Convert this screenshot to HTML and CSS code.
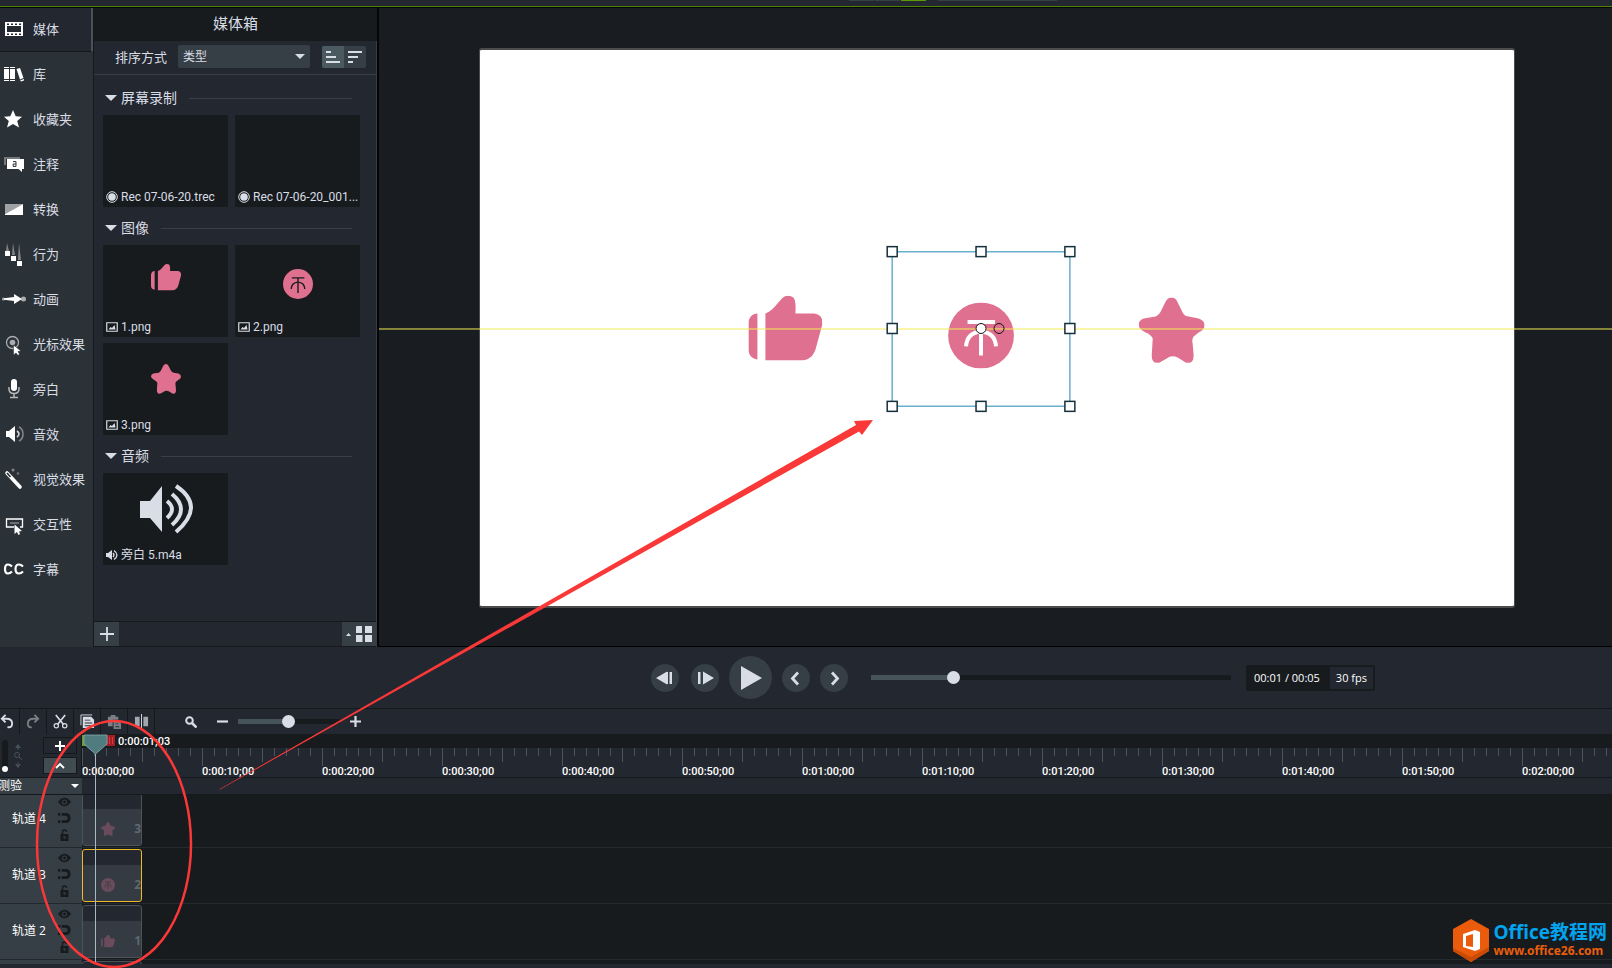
FILE: index.html
```html
<!DOCTYPE html>
<html lang="zh-CN">
<head>
<meta charset="utf-8">
<title>媒体箱</title>
<link rel="stylesheet" href="styles.css">
</head>
<body>
<svg class="defs" aria-hidden="true">
  <symbol id="thumb" viewBox="0 0 74 65"><path d="M9 18V64C3 63 0 59 0 54V28C0 22 4 18 9 18zM17 18C26 15 30 5 36 1Q41-1 45 2Q48 5 47 18H66Q75 19 74 29L68 51Q65 64 54 65H17z"/></symbol>
  <symbol id="star" viewBox="0 0 66 66"><path d="M33 0Q37 0 39 5L44 15Q46 19 50 19L60 21Q66 23 66 28Q66 32 60 35L55 39Q53 42 54 46L55 58Q55 67 47 65L39 60Q33 57 28 61L21 65Q13 67 13 58L14 41Q12 37 7 35Q0 32 0 27Q0 23 5 21L17 19Q21 17 23 12L27 4Q29 0 33 0z"/></symbol>
  <symbol id="tree" viewBox="0 0 66 66"><circle cx="33" cy="33" r="33"/><path d="M19.500 19.500H47M33 20V53M18 44Q19 30 33 29Q47 30 48 44" fill="none" stroke="var(--mark)" stroke-width="var(--mark-width)"/></symbol>
  <symbol id="picture" viewBox="0 0 12 10"><path d="M.75.75H11.250V9.250H.75z" fill="none" stroke="currentColor" stroke-width="1.200"/><path d="M2.500 7.500L4.500 5L6 6L8.500 3L9.500 7.500z" fill="currentColor"/></symbol>
  <symbol id="record" viewBox="0 0 12 12"><circle cx="6" cy="6" r="5.300" fill="none" stroke="currentColor"/><circle cx="6" cy="6" r="3.800" fill="currentColor"/></symbol>
  <symbol id="eye" viewBox="0 0 14 10"><path d="M0 5Q7-4 14 5Q7 14 0 5z"/><circle cx="7" cy="5" r="2.800" fill="#363e46"/><circle cx="7" cy="5" r="1.600"/></symbol>
  <symbol id="magnet" viewBox="0 0 14 12"><path d="M0 2H2.500M4 2H8Q12 2 12 6T8 10H4M2.500 10H0" fill="none" stroke="currentColor" stroke-width="3"/></symbol>
  <symbol id="lock" viewBox="0 0 10 12"><path d="M1 5H9V12H1z"/><path d="M3 5V3Q3 1 5 1T7 3" fill="none" stroke="currentColor" stroke-width="1.500"/><circle cx="5" cy="8.500" r="1.200" fill="#363e46"/></symbol>
</svg>

<div class="titlebar"><span class="seg"></span><span class="seg"></span><span class="seg on"></span><span class="seg wide"></span></div>

<main class="workspace">
  <nav class="sidebar">
    <button class="nav active"><svg viewBox="0 0 24 24"><path fill-rule="evenodd" d="M3 5H21V19H3zM5 9V15H19V9zM5 6.500V8H7V6.500zM9 6.500V8H11V6.500zM13 6.500V8H15V6.500zM17 6.500V8H19V6.500zM5 16.500V18H7V16.500zM9 16.500V18H11V16.500zM13 16.500V18H15V16.500zM17 16.500V18H19V16.500z"/></svg>媒体</button>
    <button class="nav"><svg viewBox="0 0 24 24"><path d="M2 7H7V17H2zM8 7H13V17H8zM14.500 7L18 6L21.500 16L18 17.500zM2 5H7V6H2zM8 5H13V6H8zM2 18H7V19H2zM8 18H13V19H8zM18 18.500L22 17V18.500L19 19.500z"/></svg>库</button>
    <button class="nav"><svg viewBox="0 0 24 24"><path d="M11 3L13.700 9.300L20 9.700L15.200 14L17 20.500L11 17L5 20.500L6.800 14L2 9.700L8.300 9.300z"/></svg>收藏夹</button>
    <button class="nav"><svg viewBox="0 0 24 24"><path d="M2 5H18V7H4V13H2z" opacity=".35"/><path d="M5 7H22V17H20V20L16.500 17H5z"/><path d="M11 9.600H14V14.400H11.200V12H14" fill="none" stroke="#2b3237"/></svg>注释</button>
    <button class="nav"><svg viewBox="0 0 24 24"><path d="M3 7H21L3 17z" opacity=".55"/><path d="M21 7V18H3V17z"/></svg>转换</button>
    <button class="nav"><svg viewBox="0 0 24 24"><path d="M5 1L7 9H4zM11 1L13 13H10zM17 1L19 18H16z" opacity=".4"/><path d="M3 9H8V14H3zM9 14H14V19H9zM15 19H20V24H15z"/></svg>行为</button>
    <button class="nav"><svg viewBox="0 0 24 24"><path d="M2 11.200L12 10V7L20 12L12 17V14L2 12.800z"/><circle cx="1.500" cy="12" r="1.500" opacity=".6"/><circle cx="21.500" cy="12" r="2.500" opacity=".6"/></svg>动画</button>
    <button class="nav"><svg viewBox="0 0 24 24"><g opacity=".6"><circle cx="10.500" cy="10.500" r="6" fill="none" stroke="currentColor" stroke-width="1.300"/><circle cx="10.500" cy="10.500" r="2.800"/></g><path d="M11.500 13V23L14 21L16 23.500L17.500 22L16 19.500L19 19z" stroke="#2b3237" stroke-width=".6"/></svg>光标效果</button>
    <button class="nav"><svg viewBox="0 0 24 24"><rect x="9" y="2" width="6" height="12" rx="3"/><path d="M7 10V12Q7 16.500 12 16.500T17 12V10M12 17V20M8 20.500H16" fill="none" stroke="currentColor" stroke-width="1.500" opacity=".65"/></svg>旁白</button>
    <button class="nav"><svg viewBox="0 0 24 24"><path d="M4 9H7L13 4V20L7 15H4z"/><path d="M15 9Q19 12 15 15" fill="none" stroke="currentColor" stroke-width="1.600" opacity=".8"/><path d="M17 5Q21 7 21 12T17 19" fill="none" stroke="currentColor" stroke-width="1.600" opacity=".4"/></svg>音效</button>
    <button class="nav"><svg viewBox="0 0 24 24"><path d="M5 6L18 20" fill="none" stroke="currentColor" stroke-width="3.600" stroke-linecap="round"/><path d="M5 6L8.500 10" stroke="#2b3237" stroke-width="1.600"/><circle cx="11" cy="3" r="1.500" opacity=".4"/><circle cx="16" cy="6.500" r="1.300" opacity=".3"/></svg>视觉效果</button>
    <button class="nav"><svg viewBox="0 0 24 24"><path d="M12 15H4.500V7H20.500V15H18" fill="none" stroke="currentColor" stroke-width="1.300"/><path d="M8 11H17" stroke="currentColor" opacity=".6"/><path d="M12.500 12.500V22L15 20L16.500 23L18 22L17 19.500L20 19z"/></svg>交互性</button>
    <button class="nav"><svg viewBox="0 0 24 24"><path d="M10 9.500Q8 7.500 6 7.500Q3 7.500 3 12T6 16.500Q8 16.500 10 14.500M21 9.500Q19 7.500 17 7.500Q13.500 7.500 13.500 12T17 16.500Q19 16.500 21 14.500" fill="none" stroke="currentColor" stroke-width="2.200"/></svg>字幕</button>
  </nav>

  <section class="bin">
    <h1>媒体箱</h1>
    <div class="sort">
      <label for="sort">排序方式</label>
      <span class="select"><select id="sort"><option>类型</option></select></span>
      <div class="order">
        <button class="on" aria-label="升序"><svg viewBox="0 0 16 14"><path d="M1 2H6M1 7H11M1 12H15" stroke="currentColor" stroke-width="2"/></svg></button>
        <button aria-label="降序"><svg viewBox="0 0 16 14"><path d="M1 2H15M1 7H11M1 12H6" stroke="currentColor" stroke-width="2"/></svg></button>
      </div>
    </div>
    <div class="groups">
      <h2>屏幕录制</h2>
      <div class="cards">
        <figure><div class="pic"></div><figcaption><svg><use href="#record"/></svg><span>Rec 07-06-20.trec</span></figcaption></figure>
        <figure><div class="pic"></div><figcaption><svg><use href="#record"/></svg><span>Rec 07-06-20_001...</span></figcaption></figure>
      </div>
      <h2>图像</h2>
      <div class="cards">
        <figure><div class="pic raised"><svg class="art"><use href="#thumb"/></svg></div><figcaption><svg><use href="#picture"/></svg><span>1.png</span></figcaption></figure>
        <figure><div class="pic"><svg class="art"><use href="#tree"/></svg></div><figcaption><svg><use href="#picture"/></svg><span>2.png</span></figcaption></figure>
        <figure><div class="pic centered"><svg class="art"><use href="#star"/></svg></div><figcaption><svg><use href="#picture"/></svg><span>3.png</span></figcaption></figure>
      </div>
      <h2>音频</h2>
      <div class="cards">
        <figure><div class="pic centered"><svg class="speaker" viewBox="0 0 54 50"><path d="M1 17H11L23 2V48L11 34H1z" fill="currentColor"/><path d="M28 17Q38 25 28 34M33 10Q51 25 33 41M37 2Q67 22 37 48" fill="none" stroke="currentColor" stroke-width="4"/></svg></div><figcaption><svg viewBox="0 0 12 12"><path d="M0 4H2L6 1V11L2 8H0z" fill="currentColor"/><path d="M7 4Q9 6 7 8M8 1.500Q14 6 8 10.500" fill="none" stroke="currentColor" stroke-width="1.300"/></svg><span>旁白 5.m4a</span></figcaption></figure>
      </div>
    </div>
    <div class="binfoot">
      <button class="add" aria-label="添加"><svg viewBox="0 0 14 14"><path d="M7 0V14M0 7H14" stroke="currentColor" stroke-width="1.800"/></svg></button>
      <button class="view" aria-label="视图"><svg viewBox="0 0 26 16"><path d="M0 10L2.500 7L5 10zM10 1Q10 0 11 0H16V7H10zM19 0H26V7H19zM10 9H16.500V16H10zM19 9H26V16H19z" fill="currentColor"/></svg></button>
    </div>
  </section>

  <section class="preview">
    <div class="stage">
      <svg class="scene" viewBox="0 0 1034 557">
        <g class="pink">
          <use href="#thumb" x="268" y="246" width="74" height="65"/>
          <use href="#tree" x="468" y="253" width="66" height="66"/>
          <use href="#star" x="659" y="248" width="66" height="66"/>
        </g>
        <path class="selection" d="M412 202H590V357H412z"/>
        <path class="guide" d="M-103 279.500H1135"/>
        <g class="handles">
          <rect x="407" y="197" width="10" height="10"/><rect x="496" y="197" width="10" height="10"/><rect x="585" y="197" width="10" height="10"/>
          <rect x="407" y="274" width="10" height="10"/><rect x="585" y="274" width="10" height="10"/>
          <rect x="407" y="352" width="10" height="10"/><rect x="496" y="352" width="10" height="10"/><rect x="585" y="352" width="10" height="10"/>
          <circle cx="501" cy="279" r="5"/><circle class="hollow" cx="519" cy="279" r="5"/>
        </g>
      </svg>
    </div>
  </section>
</main>

<section class="player">
  <button aria-label="上一帧"><svg viewBox="0 0 28 28"><path d="M5 14L16 7.500V20.500zM16 8H17V20H16zM18.500 8H21V20H18.500z" fill="currentColor"/></svg></button>
  <button aria-label="下一帧"><svg viewBox="0 0 28 28"><path d="M7 8H9.500V20H7zM12 7.500L23 14L12 20.500z" fill="currentColor"/></svg></button>
  <button class="play" aria-label="播放"><svg viewBox="0 0 43 43"><path d="M12 10L33 22L12 34z" fill="currentColor"/></svg></button>
  <button aria-label="上一个"><svg viewBox="0 0 28 28"><path d="M16 8.500L10.500 14.500L16 20.500" fill="none" stroke="currentColor" stroke-width="2.800"/></svg></button>
  <button aria-label="下一个"><svg viewBox="0 0 28 28"><path d="M12 8.500L17.500 14.500L12 20.500" fill="none" stroke="currentColor" stroke-width="2.800"/></svg></button>
  <input class="range seek" type="range" min="0" max="100" value="22" aria-label="播放位置">
  <div class="clock"><span>00:01 / 00:05</span><span class="fps">30 fps</span></div>
</section>

<section class="toolbar">
  <div class="tools">
    <button aria-label="撤消"><svg viewBox="0 0 16 16"><path d="M4 5H8Q14 5 14 10T9 14M7 1L3 5L7 9" fill="none" stroke="currentColor" stroke-width="2"/></svg></button>
    <button class="off" aria-label="重做"><svg viewBox="0 0 16 16"><path d="M12 5H8Q2 5 2 10T6 14M9 1L13 5L9 9" fill="none" stroke="currentColor" stroke-width="2"/></svg></button>
    <button aria-label="剪切"><svg viewBox="0 0 16 16"><path d="M3 1L11 11M13 1L5 11" fill="none" stroke="currentColor" stroke-width="1.800"/><circle cx="3.500" cy="12.500" r="2.300" fill="none" stroke="currentColor" stroke-width="1.300"/><circle cx="12.500" cy="12.500" r="2.300" fill="none" stroke="currentColor" stroke-width="1.300"/></svg></button>
    <button aria-label="复制"><svg viewBox="0 0 16 16"><path d="M1 12V1H13" fill="none" stroke="currentColor"/><path fill-rule="evenodd" d="M3 3H12L15 6V15H3zM5 6V7H11V6zM5 9V10H13V9zM5 12V13H13V12z" fill="currentColor"/></svg></button>
    <button class="off" aria-label="粘贴"><svg viewBox="0 0 16 16"><path fill-rule="evenodd" d="M1 3H4V1H9V3H12V6H6V13H1zM7 7H12L15 10V16H7zM9 10V11H12V10zM9 13V14H13V13z" fill="currentColor"/></svg></button>
    <button aria-label="拆分"><svg viewBox="0 0 16 16"><path d="M1 3H6V13H1zM10 3H15V13H10z" fill="currentColor" opacity=".7"/><path d="M8 0V16" stroke="currentColor"/></svg></button>
  </div>
  <div class="zoom">
    <svg class="lens" viewBox="0 0 12 12"><circle cx="4.500" cy="4.500" r="3.300" fill="none" stroke="currentColor" stroke-width="2"/><path d="M7 7L11.500 11.500" stroke="currentColor" stroke-width="2.500"/></svg>
    <button aria-label="缩小"><svg viewBox="0 0 10 10"><path d="M0 5H10" stroke="currentColor" stroke-width="2"/></svg></button>
    <input class="range" type="range" min="0" max="100" value="49" aria-label="时间轴缩放">
    <button aria-label="放大"><svg viewBox="0 0 10 10"><path d="M0 5H10M5 0V10" stroke="currentColor" stroke-width="2"/></svg></button>
  </div>
</section>

<section class="timeline">
  <div class="corner">
    <input class="vertical" type="range" min="0" max="100" value="0" aria-label="轨道高度">
    <svg class="height" viewBox="0 0 10 24"><path d="M5 0L8 4H2zM4.500 3H5.500V6H4.500zM5 24L8 20H2zM4.500 18H5.500V21H4.500z" fill="currentColor"/><circle cx="4" cy="11" r="2.500" fill="none" stroke="currentColor"/><path d="M6 13L9 16" stroke="currentColor"/></svg>
    <div class="pair">
      <button aria-label="添加轨道"><svg viewBox="0 0 10 10"><path d="M0 5H10M5 0V10" stroke="currentColor" stroke-width="2"/></svg></button>
      <button class="on" aria-label="收起"><svg viewBox="0 0 10 10"><path d="M1 7L5 3L9 7" fill="none" stroke="currentColor" stroke-width="1.800"/></svg></button>
    </div>
  </div>
  <div class="scale">
    <div class="now">0:00:01;03</div>
    <div class="ruler"><span>0:00:00;00</span><span>0:00:10;00</span><span>0:00:20;00</span><span>0:00:30;00</span><span>0:00:40;00</span><span>0:00:50;00</span><span>0:01:00;00</span><span>0:01:10;00</span><span>0:01:20;00</span><span>0:01:30;00</span><span>0:01:40;00</span><span>0:01:50;00</span><span>0:02:00;00</span></div>
  </div>
  <button class="quiz">测验</button><div class="quizlane"></div>
  <div class="head first">轨道 4<div class="flags"><svg><use href="#eye"/></svg><svg><use href="#magnet"/></svg><svg><use href="#lock"/></svg></div></div>
  <div class="lane first"><div class="clip"><svg><use href="#star"/></svg><span>3</span></div></div>
  <div class="head">轨道 3<div class="flags"><svg><use href="#eye"/></svg><svg><use href="#magnet"/></svg><svg><use href="#lock"/></svg></div></div>
  <div class="lane"><div class="clip selected"><svg><use href="#tree"/></svg><span>2</span></div></div>
  <div class="head">轨道 2<div class="flags"><svg><use href="#eye"/></svg><svg><use href="#magnet"/></svg><svg><use href="#lock"/></svg></div></div>
  <div class="lane"><div class="clip"><svg><use href="#thumb"/></svg><span>1</span></div></div>
  <div class="head last"></div><div class="lane last"><div class="clip"></div></div>
  <svg class="playhead" viewBox="0 0 34 228"><path d="M0 1H6V12H0z" fill="#6b9e1e"/><path d="M24 1H33V12H24z" fill="#a51d22"/><path d="M27.500 3V10M30.500 3V10" stroke="#d33b3f"/><path d="M2 1H25V10L13.500 20L2 10z" fill="#507c80" stroke="#77a0a3"/><path d="M13.500 20V228" stroke="#a6b9c8"/></svg>
</section>
<footer class="scrollbar"></footer>

<svg class="notes" aria-hidden="true">
  <ellipse cx="114" cy="844" rx="77" ry="123" fill="none" stroke="#fb3838" stroke-width="2.500"/>
  <path d="M219 789.500L856 425L854 421L873 420L862 435L859 431.500L220 789.500z" fill="#fb3838"/>
</svg>
<aside class="brand">
  <svg viewBox="0 0 36 44"><path d="M18 0L36 10V32L18 43L0 32V10z" fill="#ea5c0c"/><path d="M0 32L18 43L36 32V28L18 38L0 29z" fill="#c94b05"/><path fill-rule="evenodd" d="M10 15L22 11L27 13V30L22 32L10 28zM13 17V27L20 28V15z" fill="#fff"/></svg>
  <div><strong>Office教程网</strong><a href="#">www.office26.com</a></div>
</aside>
</body>
</html>
```

FILE: styles.css
```css
:root {
  --panel: #23272f;
  --dark: #171b1e;
  --raised: #363e46;
  --line: #15191c;
  --ink: #d9dde5;
  --teal: #46535a;
  --pink: #e0708f;
  --mark: #171b1e;
  --mark-width: 3;
}
* { box-sizing: border-box; }
body {
  margin: 0;
  height: 100vh;
  overflow: hidden;
  display: flex;
  flex-direction: column;
  position: relative;
  background: var(--panel);
  color: var(--ink);
  font: 13px/20px "Open Sans", "Noto Sans CJK SC", sans-serif;
}
button { border: 0; padding: 0; background: none; color: inherit; font: inherit; display: flex; align-items: center; justify-content: center; }
svg { display: block; flex: none; }
.defs { position: absolute; width: 0; height: 0; }

.titlebar { flex: none; height: 8px; border-bottom: 1px solid #050607; box-shadow: inset 0 -1px #4c8208; display: flex; gap: 1px; padding-left: 849px; }
.seg { width: 25px; height: 1px; background: var(--raised); }
.seg.on { background: #5a9a05; }
.seg.wide { width: 119px; margin-left: 11px; }

.workspace { flex: 1; min-height: 0; display: flex; }
.sidebar { width: 94px; background: #2b3237; border-right: 1px solid var(--line); overflow: hidden; }
.nav { width: 100%; height: 45px; gap: 7px; padding: 0 0 1px 2px; justify-content: flex-start; white-space: nowrap; }
.nav svg { width: 24px; height: 24px; fill: currentColor; color: #fff; }
.nav.active { height: 44px; background: var(--panel); border-right: 2px solid var(--teal); border-bottom: 1px solid var(--line); }

.bin { width: 285px; display: flex; flex-direction: column; border-right: 2px solid #050607; box-shadow: inset -1px 0 #383d45; }
h1 { margin: 0; height: 33px; font-size: 15px; line-height: 30px; font-weight: 400; text-align: center; background: var(--dark); }
.sort { height: 34px; display: flex; align-items: center; padding: 0 11px 2px 21px; border-bottom: 1px solid #3a3f47; }
.sort label { width: 63px; }
.select { width: 132px; position: relative; }
.select::after { content: ""; position: absolute; right: 5px; top: 9px; border: 5px solid transparent; border-top-color: var(--ink); border-bottom: 0; pointer-events: none; }
select { appearance: none; display: block; width: 100%; height: 23px; border: 0; border-radius: 2px; padding: 0 5px; color: var(--ink); background: var(--raised); font: 12px/20px "Open Sans", "Noto Sans CJK SC", sans-serif; }
.order { display: flex; margin-left: auto; border-radius: 2px; overflow: hidden; background: var(--raised); }
.order button { width: 22px; height: 22px; }
.order .on { background: #4a5a60; }
.order svg { width: 16px; height: 14px; }
.groups { flex: 1; padding: 13px 16px 0 9px; overflow: hidden; }
h2 { margin: 0 9px 7px 2px; height: 20px; display: flex; align-items: center; font-size: 14px; line-height: 20px; font-weight: 400; }
h2::before { content: ""; margin-right: 4px; border: 6px solid transparent; border-top-color: var(--ink); border-bottom: 0; }
h2::after { content: ""; flex: 1; height: 1px; margin-left: 12px; background: #3a3f47; }
.cards { display: grid; grid-template-columns: 125px 125px; gap: 6px 7px; margin-bottom: 11px; }
figure { margin: 0; background: var(--dark); border-radius: 1px; }
.pic { height: 72px; display: flex; align-items: center; justify-content: center; padding-top: 6px; }
.pic.centered { padding-top: 0; }
.pic.raised { padding: 0 0 8px; }
.art { width: 30px; height: 30px; fill: var(--pink); }
.speaker { width: 54px; height: 50px; }
figcaption { height: 20px; display: flex; align-items: center; gap: 3px; padding: 0 0 1px 3px; font: 12px/18px Roboto, "Noto Sans CJK SC", sans-serif; }
figcaption svg { width: 12px; height: 12px; }
figcaption span { white-space: nowrap; }
.binfoot { height: 26px; display: flex; justify-content: space-between; border-top: 1px solid var(--line); border-bottom: 1px solid var(--line); margin-right: 1px; }
.binfoot button { background: var(--raised); }
.add { width: 25px; }
.add svg { width: 14px; height: 14px; }
.view { width: 34px; }
.view svg { width: 26px; height: 16px; }

.preview { flex: 1; min-width: 0; padding: 40px 97px 38px 100px; background: #191c20; border-bottom: 1px solid #000; overflow: hidden; }
.stage { height: 100%; background: #fff; border: 1px solid #4b4b4b; border-width: 2px 1px; border-radius: 3px; }
.scene { width: 100%; height: 100%; overflow: visible; --mark: #fff; --mark-width: 4; }
.pink { fill: var(--pink); }
.selection { fill: none; stroke: #69b0ce; stroke-width: 1.500; }
.guide { stroke: #f2ec55; }
.handles { fill: #fff; stroke: #14303c; stroke-width: 1.500; }
.handles circle { stroke: #111; stroke-width: 1; }
.handles .hollow { fill: none; }

.player { flex: none; height: 62px; display: flex; align-items: center; padding-left: 651px; border-bottom: 1px solid var(--line); }
.player button { width: 28px; height: 28px; border-radius: 50%; background: var(--raised); margin-right: 10px; }
.player button:first-child { margin-right: 12px; }
.player button svg { width: 100%; }
.player .play { width: 43px; height: 43px; }
.range { appearance: none; height: 14px; margin: 0; background: linear-gradient(var(--teal), var(--teal)) 0 50% / 50% 5px no-repeat, linear-gradient(var(--dark), var(--dark)) 0 50% / 100% 5px no-repeat; }
.range::-webkit-slider-thumb { appearance: none; width: 13px; height: 13px; border-radius: 50%; background: var(--ink); }
.seek { width: 360px; margin-left: 13px; background-size: 23% 5px, 100% 5px; }
.clock { display: flex; align-items: center; gap: 10px; height: 26px; margin-left: 15px; padding: 0 2px 0 8px; border-radius: 2px; background: var(--dark); font-size: 11px; line-height: 22px; color: #fff; }
.fps { padding: 0 6px; background: var(--panel); }

.toolbar { flex: none; height: 25px; display: flex; align-items: center; overflow: hidden; }
.tools { display: flex; margin-left: -7px; }
.tools button { width: 27px; height: 25px; border-right: 1px solid var(--line); }
.tools svg { width: 15px; height: 15px; }
.off { color: #7a7f86; }
.zoom { display: flex; align-items: center; margin-left: 30px; }
.lens { width: 12px; height: 12px; margin-right: 20px; }
.zoom button svg { width: 11px; height: 11px; }
.zoom .range { width: 102px; margin: 0 10px; }

.timeline { flex: none; position: relative; display: grid; grid-template-columns: 82px minmax(0, 1fr); color: #fff; }
.corner { display: flex; align-items: center; height: 44px; padding: 0 4px 0 2px; border-bottom: 1px solid var(--line); border-right: 1px solid var(--line); }
.vertical { appearance: none; writing-mode: vertical-lr; direction: rtl; width: 6px; height: 32px; margin: 0; border-radius: 3px; background: var(--dark); }
.vertical::-webkit-slider-thumb { appearance: none; width: 6px; height: 6px; border-radius: 50%; background: #fff; }
.height { width: 10px; height: 24px; margin-left: 5px; color: var(--teal); }
.pair { margin-left: auto; display: grid; gap: 3px; }
.pair button { width: 34px; height: 17px; border: 1px solid var(--line); }
.pair .on { background: #414c52; }
.pair svg { width: 10px; height: 10px; }
.scale { background: var(--dark); border-bottom: 1px solid var(--line); overflow: hidden; }
.now { height: 14px; padding-left: 36px; font: 500 11px/15px Roboto, sans-serif; }
.ruler { height: 29px; display: flex; align-items: flex-end; font: 500 11px/11px Roboto, sans-serif;
  background:
    repeating-linear-gradient(90deg, #4a565c 0 1px, transparent 1px 120px) 0 0 / 100% 18px no-repeat,
    repeating-linear-gradient(90deg, #4a565c 0 1px, transparent 1px 60px) 0 0 / 100% 14px no-repeat,
    repeating-linear-gradient(90deg, #4a565c 0 1px, transparent 1px 12px) 0 0 / 100% 8px no-repeat,
    var(--panel); }
.ruler span { flex: 0 0 120px; }
.quiz { height: 17px; justify-content: flex-start; background: var(--raised); font-size: 12px; border-bottom: 1px solid var(--line); text-indent: -2px; }
.quiz::after { content: ""; margin-left: auto; margin-right: 3px; border: 4px solid transparent; border-top-color: #fff; border-bottom: 0; }
.quizlane { border-bottom: 1px solid var(--line); }
.head { height: 56px; display: flex; align-items: center; justify-content: space-between; padding: 0 11px 2px 12px; background: var(--raised); border-bottom: 1px solid #22282d; font-size: 12px; }
.head.first { padding-bottom: 4px; }
.flags { display: grid; gap: 5px; justify-items: center; color: var(--dark); fill: var(--dark); }
.flags svg { width: 13px; height: 12px; }
.flags svg:first-child { height: 10px; }
.lane { height: 56px; padding-top: 1px; background: var(--dark); border-bottom: 1px solid #252b2f; overflow: hidden; }
.first { height: 53px; }
.lane.first { display: flex; align-items: flex-end; padding-bottom: 1px; }
.clip { width: 60px; height: 53px; flex: none; padding: 18px 0 0 18px; display: flex; align-items: center; justify-content: space-between; overflow: hidden; border: 1px solid #4b545c; border-radius: 3px; background: linear-gradient(var(--panel) 15px, #343b43 15px); color: #606870; font: 700 12px/16px "Open Sans", sans-serif; --mark: #343b43; }
.clip svg { width: 14px; height: 14px; fill: #694b5b; }
.selected { border-color: #f0b92c; }
.head.last, .lane.last { height: 4px; border: 0; padding-bottom: 0; }
.playhead { position: absolute; left: 82px; top: 0; width: 34px; height: 228px; }
.scrollbar { flex: none; height: 4px; }

.notes { position: absolute; inset: 0; width: 100%; height: 100%; pointer-events: none; }
.brand { position: absolute; right: 5px; bottom: 5px; display: flex; gap: 4px; align-items: center; }
.brand svg { width: 36px; height: 44px; }
.brand div { display: grid; }
.brand strong { font: 700 19px/20px "Open Sans", "Noto Sans CJK SC", sans-serif; color: #00a4ef; }
.brand a { font: 700 12px/18px "Noto Sans", sans-serif; color: #eb5e0b; text-decoration: none; }
```
